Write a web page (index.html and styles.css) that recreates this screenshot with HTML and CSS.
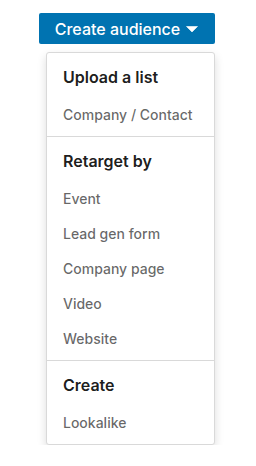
FILE: index.html
```html
<!DOCTYPE html>
<html lang="en">
<head>
<meta charset="utf-8">
<title>Create audience</title>
<link rel="stylesheet" href="styles.css">
</head>
<body>
<div class="wrap">
  <button class="btn" type="button">
    <span class="btn-label">Create audience</span>
    <svg class="caret" width="16" height="16" viewBox="0 0 16 16" aria-hidden="true"><path d="M2.5 5.5h11L8 11z" fill="#fff" stroke="#fff" stroke-width="0.6" stroke-linejoin="round"/></svg>
  </button>
  <div class="menu">
    <div class="section">
      <div class="head">Upload a list</div>
      <div class="item">Company / Contact</div>
    </div>
    <div class="section">
      <div class="head">Retarget by</div>
      <div class="item">Event</div>
      <div class="item">Lead gen form</div>
      <div class="item">Company page</div>
      <div class="item">Video</div>
      <div class="item">Website</div>
    </div>
    <div class="section">
      <div class="head">Create</div>
      <div class="item">Lookalike</div>
    </div>
  </div>
</div>
</body>
</html>
```
FILE: styles.css
```css
html, body {
  margin: 0;
  padding: 0;
  background: #fff;
}
body {
  font-family: Inter, "Liberation Sans", sans-serif;
  width: 256px;
}
.wrap {
  display: flex;
  flex-direction: column;
  align-items: flex-end;
  padding: 13px 41px 0 0;
  gap: 8px;
}
.btn {
  box-sizing: border-box;
  width: 176px;
  height: 31px;
  border: 0;
  border-radius: 2px;
  background: #0073b1;
  color: #fff;
  font-family: inherit;
  font-size: 16px;
  font-weight: 500;
  display: flex;
  align-items: center;
  justify-content: center;
  gap: 4px;
  padding: 0 0 0 1px;
}
.caret {
  display: block;
}
.menu {
  box-sizing: border-box;
  width: 169px;
  border: 1px solid #d9d9d9;
  border-radius: 3px;
  background: #fff;
  box-shadow: 0 4px 10px rgba(0, 0, 0, 0.14);
}
.section {
  padding: 4px 0;
}
.section + .section {
  border-top: 1px solid #d9d9d9;
}
.head {
  padding-left: 16px;
  font-size: 16px;
  font-weight: 600;
  line-height: 40px;
  color: rgba(0, 0, 0, 0.9);
}
.item {
  padding-left: 16px;
  font-size: 14px;
  font-weight: 500;
  line-height: 35px;
  color: rgba(0, 0, 0, 0.6);
}
```
